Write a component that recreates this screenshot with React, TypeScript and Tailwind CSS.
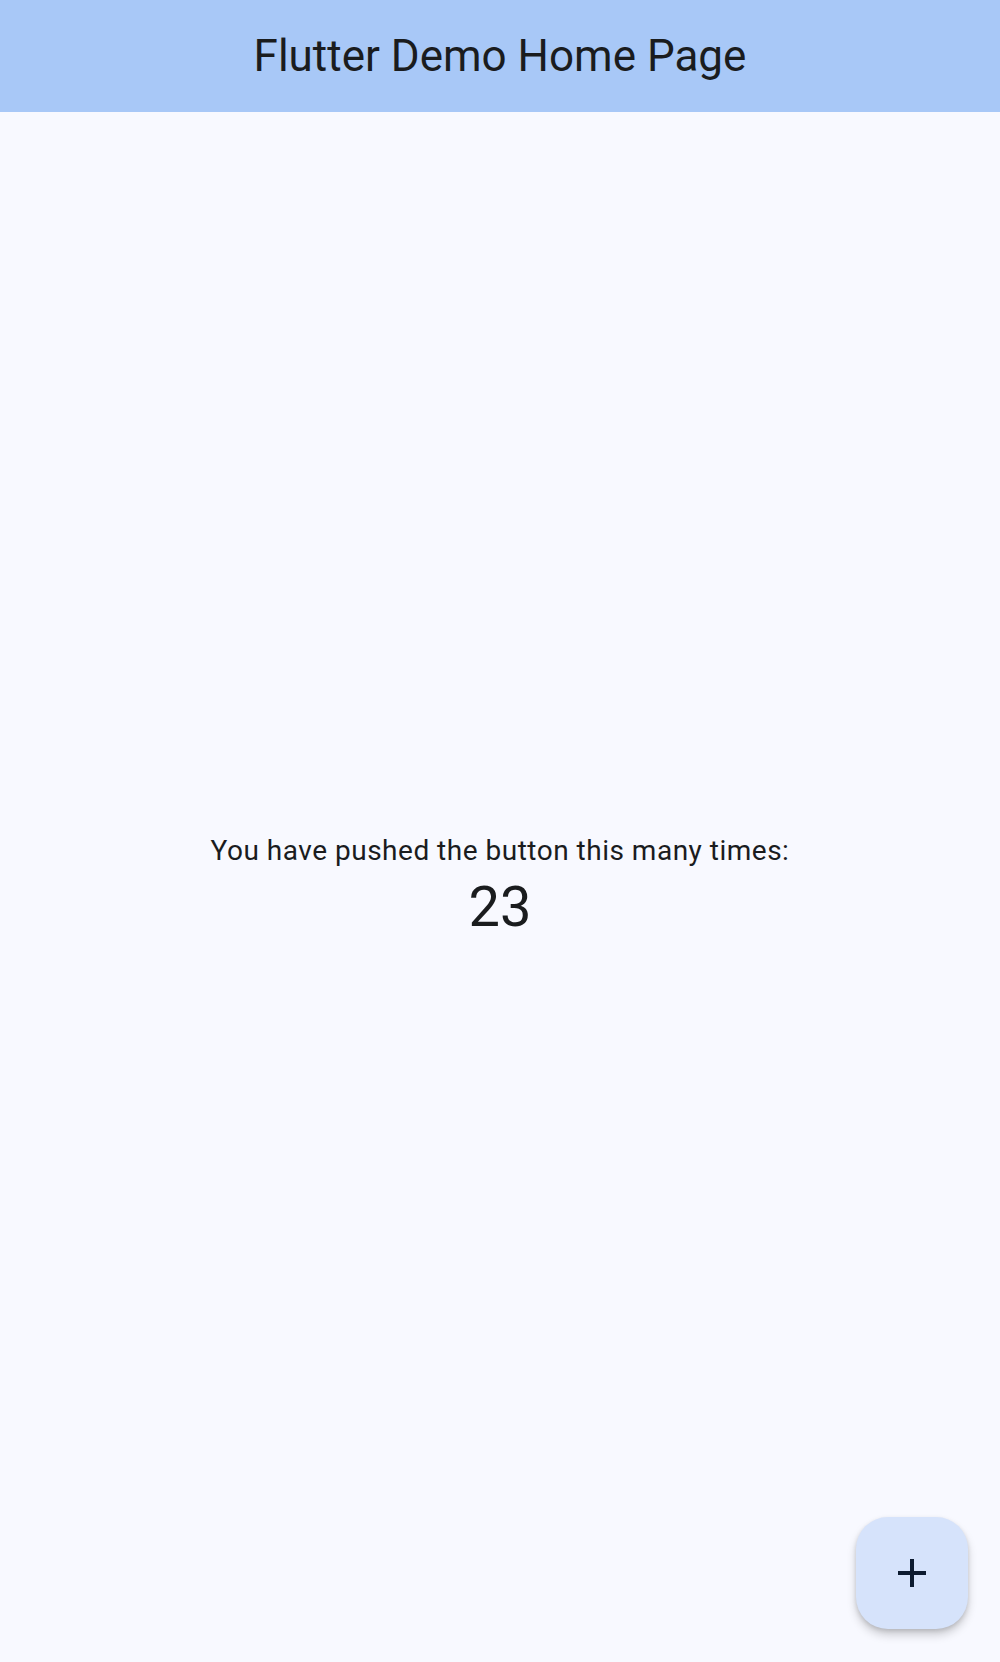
export default function App() {
  return (
    <div
      className="relative flex h-[1662px] w-full flex-col bg-[#f8f9ff] text-[#1a1c1e]"
      style={{ fontFamily: "Roboto, 'Noto Sans', sans-serif" }}
    >
      {/* App bar */}
      <header className="flex h-[112px] shrink-0 items-center justify-center bg-[#a8c8f7]">
        <h1 className="text-[44px] leading-[56px] font-normal">Flutter Demo Home Page</h1>
      </header>

      {/* Body */}
      <main className="flex flex-1 flex-col items-center justify-center">
        <p className="text-[28px] leading-[40px] tracking-[0.5px]">
          You have pushed the button this many times:
        </p>
        <p className="text-[56px] leading-[72px]">23</p>
      </main>

      {/* FAB */}
      <button
        className="absolute right-[32px] bottom-[33px] flex h-[112px] w-[112px] items-center justify-center rounded-[32px] bg-[#d6e3fb] shadow-[0_6px_10px_rgba(0,0,0,0.18),0_2px_4px_rgba(0,0,0,0.12)]"
        aria-label="Increment"
      >
        <svg width="48" height="48" viewBox="0 0 24 24" fill="#0d1b30">
          <path d="M19 13h-6v6h-2v-6H5v-2h6V5h2v6h6v2z" />
        </svg>
      </button>
    </div>
  );
}
